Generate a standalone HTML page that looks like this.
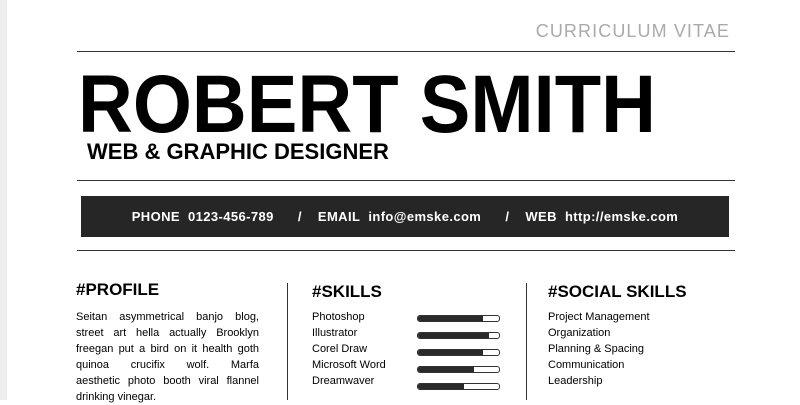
<!DOCTYPE html>
<html><head><style>
body{margin:0;width:800px;height:400px;background:#fff;position:relative;overflow:hidden;font-family:"Liberation Sans",sans-serif;color:#000}
.strip{position:absolute;left:0;top:0;width:7px;height:400px;background:#eee}
.a{position:absolute;white-space:nowrap}
.hl{position:absolute;left:77px;width:658px;height:1px;background:#333}
.vl{position:absolute;top:283px;width:1px;height:117px;background:#333}
.bar{position:absolute;left:417px;width:81px;height:5px;border:1px solid #333;border-radius:3px;background:#fff;overflow:hidden}
.bar i{display:block;height:100%;background:#2a2a2a}
.t{font-size:11px;line-height:16px}
.j div{text-align:justify;text-align-last:justify;white-space:nowrap;height:16px}
h2{margin:0;font-size:17px;font-weight:bold;letter-spacing:0;position:absolute}
</style></head><body>
<div class="strip"></div>
<div class="a" style="right:70px;top:21px;font-size:18px;color:#aaa;letter-spacing:1.1px">CURRICULUM VITAE</div>
<div class="hl" style="top:51px"></div>
<div class="a" style="left:78px;top:60px;font-size:82px;font-weight:bold;line-height:90px;transform:scaleX(0.926);transform-origin:left">ROBERT SMITH</div>
<div class="a" style="left:87px;top:139px;font-size:22px;font-weight:bold;letter-spacing:0">WEB &amp; GRAPHIC DESIGNER</div>
<div class="hl" style="top:180px"></div>
<div class="a" style="left:81px;top:196px;width:648px;height:41px;background:#262626;color:#fff;font-size:13px;font-weight:bold;line-height:41px;text-align:center;letter-spacing:0.4px">PHONE&nbsp; 0123-456-789 &nbsp; &nbsp; &nbsp;/ &nbsp; &nbsp;EMAIL&nbsp; info@emske.com &nbsp; &nbsp; &nbsp;/ &nbsp; &nbsp;WEB&nbsp; http://emske.com</div>
<div class="hl" style="top:250px"></div>
<h2 style="left:76px;top:280px">#PROFILE</h2>
<div class="a t j" style="left:76px;top:309px;width:183px;white-space:normal">
<div>Seitan asymmetrical banjo blog,</div>
<div>street art hella actually Brooklyn</div>
<div>freegan put a bird on it health goth</div>
<div>quinoa crucifix wolf. Marfa</div>
<div>aesthetic photo booth viral flannel</div>
<div style="text-align-last:left">drinking vinegar.</div>
</div>
<div class="vl" style="left:287px"></div>
<h2 style="left:312px;top:282px">#SKILLS</h2>
<div class="a t" style="left:312px;top:309px">Photoshop<br>Illustrator<br>Corel Draw<br>Microsoft Word<br>Dreamwaver</div>
<div class="bar" style="top:315px"><i style="width:80%"></i></div>
<div class="bar" style="top:332px"><i style="width:88%"></i></div>
<div class="bar" style="top:349px"><i style="width:80%"></i></div>
<div class="bar" style="top:366px"><i style="width:69%"></i></div>
<div class="bar" style="top:383px"><i style="width:57%"></i></div>
<div class="vl" style="left:526px"></div>
<h2 style="left:548px;top:282px">#SOCIAL SKILLS</h2>
<div class="a t" style="left:548px;top:309px">Project Management<br>Organization<br>Planning &amp; Spacing<br>Communication<br>Leadership</div>
</body></html>
